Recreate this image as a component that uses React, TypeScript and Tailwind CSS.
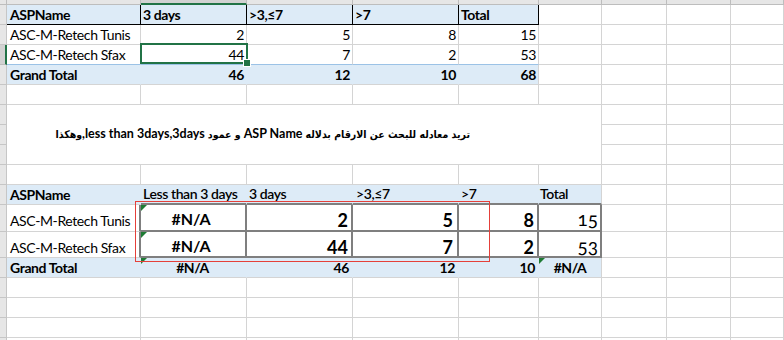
import React from 'react';

type Cell = {
  t?: React.ReactNode;
  c?: string;
  tri?: boolean;
  sel?: boolean;
};

const BASE =
  'relative flex items-end whitespace-nowrap border-r border-b leading-[18px] text-[14px] tracking-[-0.4px] text-black';

const L = 'pl-[3px]';
const R = 'justify-end pr-[2px]';
const HEAD = 'bg-[#ddebf7] font-bold border-[#d4d4d4] border-r-black border-b-black';
const GT = 'bg-[#ddebf7] font-bold border-[#d4d4d4] border-r-[#ddebf7]';
const BIG = 'border-r-2 border-b-2 border-[#7f7f7f] tracking-normal';
const TOPBIG = 'border-b-2 border-b-[#7f7f7f]';

const empty = (n: number): Cell[] => Array.from({ length: n }, () => ({}));

// rows 1..17 (row 0 = column header strip), columns A..I
const rows: Record<number, Cell[]> = {
  1: [
    { t: 'ASPName', c: `${HEAD} ${L}` },
    { t: '3 days', c: `${HEAD} pl-[2px]` },
    { t: '>3,≤7', c: `${HEAD} pl-[2px]` },
    { t: '>7', c: `${HEAD} pl-[2px]` },
    { t: 'Total', c: `${HEAD} pl-[2px]` },
    ...empty(4),
  ],
  2: [
    { t: 'ASC-M-Retech Tunis', c: L },
    { t: '2', c: R },
    { t: '5', c: R },
    { t: '8', c: R },
    { t: '15', c: R },
    ...empty(4),
  ],
  3: [
    { t: 'ASC-M-Retech Sfax', c: `${L} border-b-[#9bc2e6]` },
    { t: '44', c: `${R} border-b-[#9bc2e6]`, sel: true },
    { t: '7', c: `${R} border-b-[#9bc2e6]` },
    { t: '2', c: `${R} border-b-[#9bc2e6]` },
    { t: '53', c: `${R} border-b-[#9bc2e6]` },
    ...empty(4),
  ],
  4: [
    { t: 'Grand Total', c: `${GT} ${L}` },
    { t: '46', c: `${GT} ${R}` },
    { t: '12', c: `${GT} ${R}` },
    { t: '10', c: `${GT} ${R}` },
    { t: '68', c: `bg-[#ddebf7] font-bold ${R}` },
    ...empty(4),
  ],
  5: empty(9),
  9: empty(9),
  10: [
    { t: 'ASPName', c: `${GT} ${L}` },
    { t: 'Less than 3 days', c: `${GT} ${TOPBIG} !font-semibold pl-[2px]` },
    { t: '3 days', c: `${GT} ${TOPBIG} !font-semibold pl-[2px]` },
    { t: '>3,≤7', c: `${GT} ${TOPBIG} !font-semibold pl-[3px]` },
    { t: '>7', c: `${GT} ${TOPBIG} !font-semibold pl-[2px]` },
    { t: 'Total', c: `bg-[#ddebf7] ${TOPBIG} font-semibold pl-[1px]` },
    ...empty(3),
  ],
  11: [
    { t: 'ASC-M-Retech Tunis', c: `${L} border-r-2 border-r-[#7f7f7f] pb-[1px]` },
    { t: '#N/A', c: `${BIG} justify-center pr-[4px] text-[16px] font-bold pb-[2px]`, tri: true },
    { t: '2', c: `${BIG} justify-end pr-[3px] text-[18px] font-bold pb-[1px]` },
    { t: '5', c: `${BIG} justify-end pr-[4px] text-[18px] font-bold pb-[1px]` },
    { t: '8', c: `${BIG} justify-end pr-[3px] text-[18px] font-bold pb-[1px]` },
    { t: '15', c: `${BIG} justify-end pr-[2px] text-[19px] [font-feature-settings:'onum'] pb-[2px]` },
    ...empty(3),
  ],
  12: [
    { t: 'ASC-M-Retech Sfax', c: `${L} border-r-2 border-r-[#7f7f7f]` },
    { t: '#N/A', c: `${BIG} justify-center pr-[4px] text-[16px] font-bold pb-[1px]`, tri: true },
    { t: '44', c: `${BIG} justify-end pr-[3px] text-[18px] font-bold` },
    { t: '7', c: `${BIG} justify-end pr-[4px] text-[18px] font-bold` },
    { t: '2', c: `${BIG} justify-end pr-[3px] text-[18px] font-bold` },
    { t: '53', c: `${BIG} justify-end pr-[2px] text-[19px] [font-feature-settings:'onum'] pb-[1px]` },
    ...empty(3),
  ],
  13: [
    { t: 'Grand Total', c: `${GT} ${L}` },
    { t: '#N/A', c: `${GT} justify-center pr-[2px]`, tri: true },
    { t: '46', c: `${GT} justify-end pr-[3px]` },
    { t: '12', c: `${GT} justify-end pr-[3px]` },
    { t: '10', c: `${GT} justify-end pr-[3px]` },
    { t: '#N/A', c: `bg-[#ddebf7] font-bold justify-center`, tri: true },
    ...empty(3),
  ],
  14: empty(9),
  15: empty(9),
  16: empty(9),
  17: empty(9),
};

function Tri() {
  return (
    <span className="absolute left-0 top-0 h-0 w-0 border-t-[6px] border-r-[6px] border-t-[#1e7b34] border-r-transparent" />
  );
}

function RowHead({ sel }: { sel?: boolean }) {
  return sel ? (
    <div className="bg-[#d2d2d2] border-r-2 border-b border-r-[#217346] border-b-[#bdbdbd]" />
  ) : (
    <div className="bg-[#e6e6e6] border-r border-b border-[#c6c6c6]" />
  );
}

function Cells({ cells }: { cells: Cell[] }) {
  return (
    <>
      {cells.map((cell, i) => (
        <div
          key={i}
          className={`${BASE} ${cell.sel ? 'z-10 overflow-visible' : 'overflow-hidden'} ${
            cell.c && cell.c.includes('border-[') ? '' : 'border-[#d4d4d4]'
          } ${cell.c ?? ''}`}
        >
          {cell.tri && <Tri />}
          {cell.t}
          {cell.sel && (
            <span className="absolute -top-[2px] -left-[1px] -right-[2px] bottom-0 border-2 border-[#217346]">
              <span className="absolute -right-[4px] -bottom-[4px] h-[6px] w-[6px] bg-[#217346] outline outline-white" />
            </span>
          )}
        </div>
      ))}
    </>
  );
}

function Ar({ children }: { children: React.ReactNode }) {
  return <span className="text-[10.5px] [font-family:'DejaVu_Sans_Condensed','DejaVu_Sans',sans-serif]">{children}</span>;
}

export default function App() {
  const colHeads = [false, true, false, false, false, false, false, false, false];

  return (
    <div className="relative h-[340px] w-[784px] overflow-hidden bg-white [font-family:Lato,'DejaVu_Sans',sans-serif]">
      <div className="grid grid-cols-[7px_134px_106px_106px_106px_80px_63px_65px_64px_1fr] grid-rows-[5px_repeat(10,20px)_27px_26px_repeat(5,20px)]">
        {/* column header strip */}
        <div className="bg-[#e6e6e6] border-r border-b border-[#bdbdbd]" />
        {colHeads.map((sel, i) =>
          sel ? (
            <div key={i} className="bg-[#d2d2d2] border-r border-b-2 border-r-[#bdbdbd] border-b-[#217346]" />
          ) : (
            <div key={i} className="bg-[#e6e6e6] border-r border-b border-[#bdbdbd]" />
          )
        )}

        {[1, 2, 3, 4, 5].map((r) => (
          <React.Fragment key={r}>
            <RowHead sel={r === 3} />
            <Cells cells={rows[r]} />
          </React.Fragment>
        ))}

        {/* merged A6:F8 with the question */}
        <div className="col-start-2 col-span-6 row-start-7 row-span-3 flex items-center justify-end border-r border-b border-[#d4d4d4] pr-[131px]">
          <p dir="rtl" className="text-[12.5px] font-bold leading-none text-black whitespace-nowrap">
            <Ar>تريد معادله  للبحث عن الارقام بدلاله</Ar> ASP Name <Ar>و عمود</Ar> less than 3days,3days,<Ar>وهكذا</Ar>
          </p>
        </div>
        {[6, 7, 8].map((r) => (
          <React.Fragment key={r}>
            <RowHead />
            <Cells cells={empty(3)} />
          </React.Fragment>
        ))}

        {[9, 10, 11, 12, 13, 14, 15, 16, 17].map((r) => (
          <React.Fragment key={r}>
            <RowHead />
            <Cells cells={rows[r]} />
          </React.Fragment>
        ))}
      </div>

      {/* red rectangle shape drawn over the sheet */}
      <div className="pointer-events-none absolute left-[135px] top-[201px] h-[61px] w-[355px] border border-[#e5403a]" />
    </div>
  );
}
